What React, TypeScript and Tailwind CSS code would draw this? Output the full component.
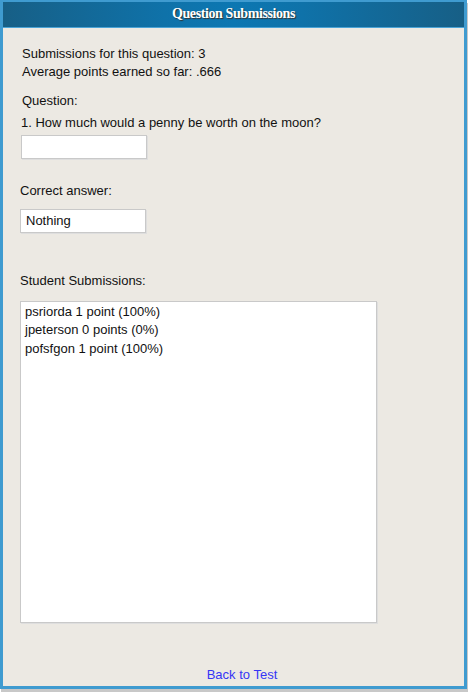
export default function App() {
  const subs = ["psriorda 1 point (100%)", "jpeterson 0 points (0%)", "pofsfgon 1 point (100%)"];
  return (
    <div className="w-[468px] h-[692px] bg-white">
      <div
        className="w-[467px] h-[689px] border-[3px] border-t-2 border-[#3f9bd0] flex flex-col shadow-[1px_3px_0_#c8c8c8] text-[13px] leading-[18px] text-[#111]"
        style={{ fontFamily: '"Liberation Sans", Arial, sans-serif' }}
      >
        <div className="h-[26px] shrink-0 flex items-center justify-center pb-[1px] bg-[linear-gradient(90deg,#175f86_0%,#0f72a9_35%,#0c77b2_50%,#0f72a9_65%,#175f86_100%)] border-b border-[#4aa3d6]">
          <span
            className="text-white font-bold text-[14px] leading-none tracking-[-0.4px] [text-shadow:1px_1px_1px_#333]"
            style={{ fontFamily: '"Liberation Serif", "Times New Roman", serif' }}
          >
            Question Submissions
          </span>
        </div>
        <div className="flex-1 bg-[#ece9e3] flex flex-col pl-[17px] pt-[17px]">
          <div className="pl-[2px]">Submissions for this question: 3</div>
          <div className="pl-[2px]">Average points earned so far: .666</div>
          <div className="mt-[11px] pl-[2px]">Question:</div>
          <div className="mt-[4px] pl-[1px]">1. How much would a penny be worth on the moon?</div>
          <div className="mt-[3px] ml-[1px] w-[126px] h-[24px] bg-white border border-[#c9c9c9] shadow-[1px_1px_0_#dedede]" />
          <div className="mt-[23px]">Correct answer:</div>
          <div className="mt-[9px] w-[126px] h-[24px] bg-white border border-[#c9c9c9] shadow-[1px_1px_0_#dedede] pl-[5px] leading-[21px]">
            Nothing
          </div>
          <div className="mt-[39px]">Student Submissions:</div>
          <div className="mt-[11px] w-[357px] h-[322px] bg-white border border-[#c9c9c9] shadow-[1px_1px_0_#dedede] pl-[4px] pt-[1px]">
            {subs.map((s) => (
              <div key={s} className="leading-[18.3px]">{s}</div>
            ))}
          </div>
          <div className="mt-auto mb-[2px] text-center text-[#3535f5]">Back to Test</div>
        </div>
      </div>
    </div>
  );
}
